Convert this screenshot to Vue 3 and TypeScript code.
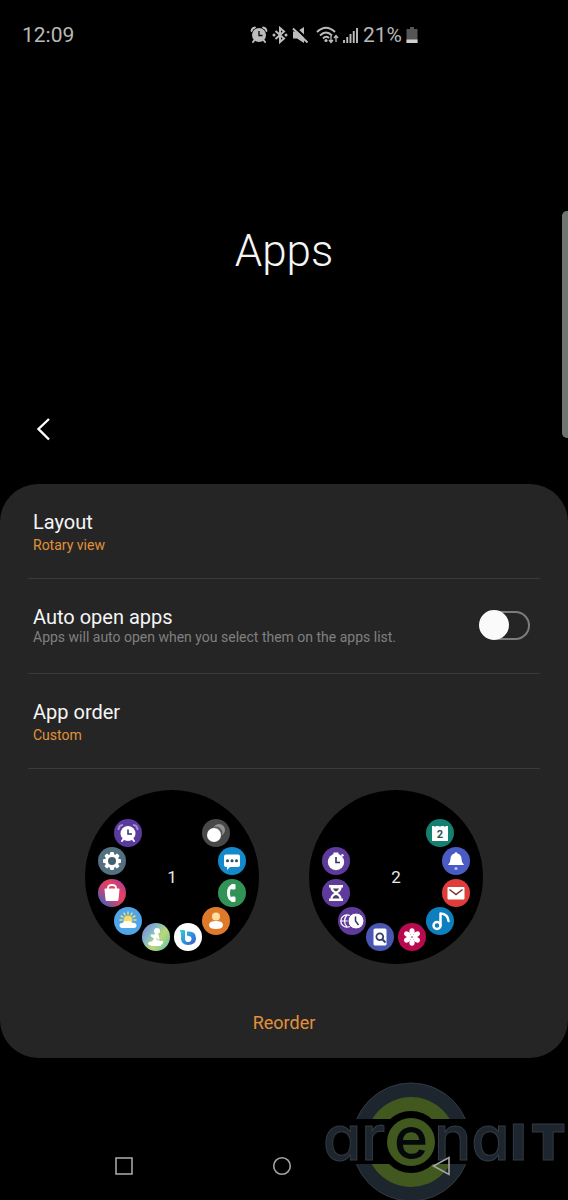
<script setup lang="ts">
import { ref } from 'vue'

interface DialApp {
  icon: string
  slot: number
}

interface Dial {
  label: string
  apps: DialApp[]
}

const autoOpen = ref(false)

const ring = (icons: string[], first: number): DialApp[] =>
  icons.map((icon, i) => ({ icon, slot: first + i }))

const dials: Dial[] = [
  {
    label: '1',
    apps: ring(
      ['recent', 'messages', 'phone', 'contacts', 'bixby', 'health', 'weather', 'store', 'settings', 'alarm'],
      1,
    ),
  },
  {
    label: '2',
    apps: ring(
      ['calendar', 'reminder', 'mail', 'music', 'gallery', 'finder', 'world', 'timer', 'stopwatch'],
      1,
    ),
  },
]

/* Twelve slots of 30 degrees, the first one centred 15 degrees past the top. */
const place = (slot: number): string => {
  const angle = ((slot * 30 + 15) * Math.PI) / 180
  return `translate(${Math.round(62 * Math.sin(angle))} ${Math.round(-62 * Math.cos(angle))})`
}

const gearTeeth = [0, 45, 90, 135, 180, 225, 270, 315]
const petals = [0, 60, 120, 180, 240, 300]
const rays = [-90, -60, -30, 0, 30, 60, 90]
</script>

<template>
  <div class="screen">
    <svg class="sprite" aria-hidden="true">
      <defs>
        <linearGradient id="g-store" x1="0" y1="1" x2="1" y2="0">
          <stop offset="0.1" stop-color="#3c62c4" />
          <stop offset="0.4" stop-color="#c44473" />
          <stop offset="0.65" stop-color="#e83f63" />
          <stop offset="1" stop-color="#8f3bb0" />
        </linearGradient>
        <linearGradient id="g-health" x1="0" y1="0.1" x2="1" y2="0.9">
          <stop offset="0" stop-color="#8d7fd0" />
          <stop offset="0.3" stop-color="#7fb8cc" />
          <stop offset="0.6" stop-color="#bcd873" />
          <stop offset="1" stop-color="#63c2b4" />
        </linearGradient>
        <linearGradient id="g-bixby" x1="0" y1="0" x2="1" y2="1">
          <stop offset="0" stop-color="#35d0d8" />
          <stop offset="0.55" stop-color="#2c8fdc" />
          <stop offset="1" stop-color="#4b50c8" />
        </linearGradient>

        <g id="app-recent">
          <circle r="14" fill="#484848" />
          <circle cx="3" cy="-3" r="6" fill="#929292" />
          <circle cx="0" cy="0" r="6.500" fill="#5c5c5c" />
          <circle cx="-2" cy="2" r="7" fill="#fff" />
        </g>
        <g id="app-messages">
          <circle r="14" fill="#128acb" />
          <path d="M-6-6.500H6Q8-6.500 8-4.500V4Q8 6 6 6H-2L-5 9V6H-6Q-8 6-8 4V-4.500Q-8-6.500-6-6.500Z" fill="#fff" />
          <g fill="#20506f">
            <circle cx="-4.500" cy="-0.300" r="1.500" />
            <circle cy="-0.300" r="1.500" />
            <circle cx="4.500" cy="-0.300" r="1.500" />
          </g>
        </g>
        <g id="app-phone">
          <circle r="14" fill="#319356" />
          <path d="M1-7Q-3.500-6.500-3.500 0T1 7" fill="none" stroke="#fff" stroke-width="3" />
          <rect x="-1" y="-9" width="4.500" height="5.500" rx="1.200" fill="#fff" />
          <rect x="-1" y="3.500" width="4.500" height="5.500" rx="1.200" fill="#fff" />
        </g>
        <g id="app-contacts">
          <circle r="14" fill="#e07a2b" />
          <circle cy="-4.500" r="4" fill="#ffdf9f" />
          <path d="M-7 4Q-7 0 0 0T7 4Q7 8 0 8T-7 4Z" fill="#fff" />
        </g>
        <g id="app-bixby">
          <circle r="14" fill="#fff" />
          <path d="M-8-7H-4Q-3-7-3-6V1.500Q-3 5 0 5Q3.500 5 3.500 1.500Q3.500-1-1-1.500V-5.500H1Q8-5.500 8 1.500Q8 8 0 8Q-7 8-7 1.500V-4Q-8-5-8-7Z" fill="url(#g-bixby)" />
        </g>
        <g id="app-health">
          <circle r="14" fill="url(#g-health)" />
          <circle cx="1" cy="-6" r="3" fill="#fff" />
          <path d="M-5.500-2.500L-2-2.500L0-3.500Q3-3.500 3 0L4 4H7V6L4.500 9H-3Q-8 8.500-8 6Q-7 4-4 4.500L-2 1.500L-5-0.500Z" fill="#fff" />
          <path d="M0 1.500Q3 4.500 5.500 2" fill="none" stroke="#a8cfa0" stroke-width="1" />
        </g>
        <g id="app-weather">
          <circle r="14" fill="#4fa5e8" />
          <circle cy="-1" r="4.500" fill="#f6dc62" />
          <path
            v-for="a in rays"
            :key="a"
            d="M0-6V-8"
            :transform="`translate(0 -1) rotate(${a})`"
            stroke="#f6dc62"
            stroke-width="1.500"
            stroke-linecap="round"
          />
          <path d="M-5.500 7Q-8.500 7-8.500 4.300Q-8.500 2-5.500 2Q-4-1-1 0.300Q2-1 4 1.800Q8.500 1.500 8.500 4.500Q8.500 7 5.500 7Z" fill="#fff" />
        </g>
        <g id="app-store">
          <circle r="14" fill="url(#g-store)" />
          <path d="M-4-3V-5Q-4-8 0-8T4-5V-3" fill="none" stroke="#fff" stroke-width="1.800" />
          <path d="M-6.500-4.500H6.500Q7.700-4.500 7.500-3.500L6.500 6.500Q6.300 8 5 8H-5Q-6.300 8-6.500 6.500L-7.500-3.500Q-7.700-4.500-6.500-4.500Z" fill="#fff" />
        </g>
        <g id="app-settings">
          <circle r="14" fill="#527080" />
          <circle r="7" fill="#fff" />
          <rect
            v-for="a in gearTeeth"
            :key="a"
            x="-2"
            y="-9"
            width="4"
            height="5"
            rx="1"
            fill="#fff"
            :transform="`rotate(${a})`"
          />
          <circle r="4" fill="#46606e" />
        </g>
        <g id="app-alarm">
          <circle r="14" fill="#5a3a9d" />
          <path d="M-9.500-3Q-9.500-8-5-8M9.500-3Q9.500-8 5-8" fill="none" stroke="#a98bd8" stroke-width="2" />
          <path d="M-4.500 6L-6 8M4.500 6L6 8" stroke="#fff" stroke-width="2" stroke-linecap="round" />
          <circle cy="0.500" r="7.500" fill="#fff" />
          <path d="M0-3.500V1H4" fill="none" stroke="#3b2f63" stroke-width="1.500" />
        </g>

        <g id="app-calendar">
          <circle r="14" fill="#148170" />
          <path d="M-8-7H-6L-5-6L-4-7H-1L0-6L1-7H4L5-6L6-7H8V8H-8Z" fill="#fff" />
          <text y="5" class="day">2</text>
        </g>
        <g id="app-reminder">
          <circle r="14" fill="#4a5bc4" />
          <path d="M-1.500-7.500Q0-10.500 1.500-7.500Q5.500-6.500 5.500-2Q5.500 1.500 8 4H-8Q-5.500 1.500-5.500-2Q-5.500-6.500-1.500-7.500Z" fill="#fff" />
          <circle cy="7.500" r="1.600" fill="#a7c2ff" />
        </g>
        <g id="app-mail">
          <circle r="14" fill="#df3d39" />
          <rect x="-8.500" y="-6" width="17" height="12.500" rx="1" fill="#fff" />
          <path d="M-6.500-3.500L0 1.500L6.500-3.500" fill="none" stroke="#792f35" stroke-width="1.500" />
        </g>
        <g id="app-music">
          <circle r="14" fill="#0e7fbe" />
          <circle cx="-3" cy="4.500" r="3.500" fill="none" stroke="#fff" stroke-width="2.500" />
          <path d="M0.500 4.500V-7.500Q8-7 8.500 0" fill="none" stroke="#fff" stroke-width="2.500" stroke-linecap="round" stroke-linejoin="round" />
        </g>
        <g id="app-gallery">
          <circle r="14" fill="#b90a50" />
          <ellipse v-for="a in petals" :key="a" cy="-5.500" rx="2.600" ry="3.300" fill="#fff" :transform="`rotate(${a})`" />
          <path v-for="a in petals" :key="`s${a}`" d="M0 0V-4" stroke="#fff" stroke-width="2.400" :transform="`rotate(${a})`" />
          <circle r="0.800" fill="#b90a50" />
        </g>
        <g id="app-finder">
          <circle r="14" fill="#4957b2" />
          <rect x="-6.500" y="-8.500" width="13" height="17" rx="1.500" fill="#fff" />
          <circle cx="-0.200" cy="-0.200" r="3.400" fill="none" stroke="#39406f" stroke-width="1.800" />
          <path d="M2.300 2.300L5.500 5.500" stroke="#39406f" stroke-width="2" />
        </g>
        <g id="app-world">
          <circle r="14" fill="#5e3b9a" />
          <circle cx="-5" r="6.200" fill="none" stroke="#fff" stroke-width="1.300" />
          <path d="M-5-6Q-10 0-5 6M-11 0H-4" fill="none" stroke="#fff" stroke-width="1.200" />
          <circle cx="4" r="8" fill="#fff" stroke="#5e3b9a" stroke-width="1" />
          <path d="M3.500-4.500V0L6.500 4" fill="none" stroke="#3b2f63" stroke-width="1.500" />
        </g>
        <g id="app-timer">
          <circle r="14" fill="#5e3b9a" />
          <path d="M-7-8H7V-5.500H5.500Q5.500-2 1.500 0Q5.500 2 5.500 5.500H7V8H-7V5.500H-5.500Q-5.500 2-1.500 0Q-5.500-2-5.500-5.500H-7Z" fill="#fff" />
          <path d="M-3-4.500H3Q2.500-2.500 0-1.500Q-2.500-2.500-3-4.500ZM-3.500 5.500Q-3 2.500 0 2Q3 2.500 3.500 5.500Z" fill="#49405f" />
        </g>
        <g id="app-stopwatch">
          <circle r="14" fill="#5e3b9a" />
          <path d="M-2.500-7.500H2.500M5.500-6.500L7.500-5" stroke="#fff" stroke-width="2" />
          <circle cy="1" r="8.200" fill="#fff" />
          <path d="M0-4V1.500H4" fill="none" stroke="#3b2f63" stroke-width="1.600" />
        </g>
      </defs>
    </svg>

    <header class="status">
      <time class="clock">12:09</time>
      <div class="indicators">
        <svg width="18" height="18" viewBox="0 0 18 18" aria-label="Alarm">
          <g fill="none" stroke="#bdbdbd" stroke-linecap="round">
            <path d="M1.500 5Q2 2 5 1.500M16.500 5Q16 2 13 1.500" stroke-width="1.800" />
            <path d="M4.500 14L3 16M13.500 14L15 16" stroke-width="2" />
          </g>
          <circle cx="9" cy="9" r="7" fill="#bdbdbd" />
          <path d="M9 5V9.500H12.500" fill="none" stroke="#111" stroke-width="1.400" />
        </svg>
        <svg width="16" height="18" viewBox="0 0 16 18" aria-label="Bluetooth">
          <path d="M3.500 5L12 12.500L8 16V2L12 5.500L3.500 13" fill="none" stroke="#bdbdbd" stroke-width="2" />
          <circle cx="2" cy="9" r="1.500" fill="#bdbdbd" />
          <circle cx="14" cy="9" r="1.500" fill="#bdbdbd" />
        </svg>
        <svg width="17" height="18" viewBox="0 0 17 18" aria-label="Muted">
          <path d="M1 5.500H5L12 1V17L5 12.500H1Z" fill="#bdbdbd" />
          <path d="M2.500 1L17 15" stroke="#000" stroke-width="2.400" />
          <path d="M1 2.500L15.500 16.500" stroke="#bdbdbd" stroke-width="2" />
        </svg>
        <svg class="wifi" width="23" height="18" viewBox="0 0 23 18" aria-label="Wi-Fi">
          <g fill="none" stroke="#bdbdbd" stroke-width="1.900">
            <path d="M1 6Q10-2.500 19 6" />
            <path d="M4 9.500Q10 3.500 16 9.500" />
            <path d="M7 12.500Q10 9.500 13 12" />
          </g>
          <circle cx="10" cy="14.500" r="1.600" fill="#bdbdbd" />
          <path d="M15 10V16M13 14L15 16.500L17 14M20 16V10M18 12L20 9.500L22 12" fill="none" stroke="#bdbdbd" stroke-width="1.300" />
        </svg>
        <svg width="15" height="18" viewBox="0 0 15 18" aria-label="Signal">
          <path d="M1 17V14M4.250 17V11M7.500 17V8M10.750 17V5M14 17V2" stroke="#bdbdbd" stroke-width="1.900" />
        </svg>
        <span class="percent">21%</span>
        <svg width="12" height="18" viewBox="0 0 12 18" aria-label="Battery">
          <path d="M4 1H8V3H11.500V17H0.500V3H4Z" fill="#555" />
          <path d="M0.500 13.500H11.500V17H0.500Z" fill="#d0d0d0" />
        </svg>
      </div>
    </header>

    <main>
      <h1 class="title">Apps</h1>
      <button class="back" type="button" aria-label="Back">
        <svg width="16" height="24" viewBox="0 0 16 24">
          <path d="M14 2L3.500 12L14 22.500" fill="none" stroke="#fff" stroke-width="2.400" />
        </svg>
      </button>

      <section class="panel">
        <button class="row choice-row" type="button">
          <span class="name">Layout</span>
          <span class="value">Rotary view</span>
        </button>
        <div class="row switch-row">
          <label for="auto-open">
            <span class="name">Auto open apps</span>
            <span class="hint">Apps will auto open when you select them on the apps list.</span>
          </label>
          <input id="auto-open" v-model="autoOpen" class="switch" type="checkbox" role="switch" />
        </div>
        <button class="row choice-row" type="button">
          <span class="name">App order</span>
          <span class="value">Custom</span>
        </button>

        <div class="dials">
          <svg v-for="dial in dials" :key="dial.label" class="dial" viewBox="-87 -87 174 174">
            <circle r="87" fill="#000" />
            <text class="page" y="6">{{ dial.label }}</text>
            <use v-for="app in dial.apps" :key="app.icon" :href="`#app-${app.icon}`" :transform="place(app.slot)" />
          </svg>
        </div>

        <button class="reorder" type="button">Reorder</button>
      </section>
    </main>

    <svg class="brand" width="250" height="120" viewBox="0 0 250 120" aria-label="arenaIT">
      <defs>
        <clipPath id="brand-caps">
          <path d="M0 0H250V39H0ZM0 84H250V120H0Z" />
        </clipPath>
      </defs>
      <g clip-path="url(#brand-caps)">
        <circle cx="93" cy="62" r="59" fill="#1d252e" stroke="#343b43" />
        <circle cx="93" cy="62" r="45" fill="#41591f" />
        <circle cx="93" cy="62" r="31" fill="#000" />
      </g>
      <circle cx="93" cy="62" r="24" fill="#41591f" />
      <g class="wordmark">
        <text x="5" y="80">ar</text>
        <text class="core" x="93" y="79">e</text>
        <text x="116" y="80">na</text>
        <text class="caps" x="193" y="80">I</text>
        <text class="caps" x="213" y="80">T</text>
      </g>
    </svg>

    <nav class="keys">
      <button type="button" aria-label="Recents">
        <svg width="20" height="20" viewBox="0 0 20 20"><rect x="2" y="2" width="16" height="16" fill="none" stroke="#a4a4a4" stroke-width="1.600" /></svg>
      </button>
      <button type="button" aria-label="Home">
        <svg width="20" height="20" viewBox="0 0 20 20"><circle cx="10" cy="10" r="8.300" fill="none" stroke="#a4a4a4" stroke-width="1.600" /></svg>
      </button>
      <button type="button" aria-label="Back">
        <svg width="20" height="20" viewBox="0 0 20 20"><path d="M18 1.500V18.500L2.500 10Z" fill="none" stroke="#a4a4a4" stroke-width="1.600" /></svg>
      </button>
    </nav>

    <div class="edge-handle"></div>
  </div>
</template>

<style>
body {
  margin: 0;
  background: #000;
}
</style>

<style scoped>
.screen {
  position: relative;
  display: flex;
  flex-direction: column;
  min-height: 100vh;
  background: #000;
  color: #f5f5f5;
  font-family: Roboto, 'Liberation Sans', sans-serif;
}

.sprite {
  position: absolute;
  width: 0;
  height: 0;
}

button {
  margin: 0;
  padding: 0;
  border: 0;
  background: none;
  color: inherit;
  font: inherit;
  cursor: pointer;
}

svg {
  display: block;
}

.status {
  display: grid;
  grid-template-columns: 44% 1fr;
  align-items: center;
  height: 70px;
  color: #b8b8b8;
  font-size: 21px;
}

.clock {
  padding-left: 22px;
}

.indicators {
  display: flex;
  align-items: center;
  gap: 4px;
}

.wifi {
  margin-left: 3px;
}

.percent {
  padding-left: 1px;
}

.title {
  margin: 0;
  padding-top: 153px;
  font-size: 44px;
  font-weight: 300;
  line-height: 56px;
  text-align: center;
}

.back {
  display: grid;
  place-items: center;
  width: 48px;
  height: 48px;
  margin: 126px 0 31px 19px;
}

.panel {
  padding-bottom: 23px;
  border-radius: 38px;
  background: #252525;
}

.row {
  display: flex;
  box-sizing: border-box;
  width: calc(100% - 56px);
  min-height: 95px;
  margin: 0 28px;
  padding: 26px 10px 18px 5px;
  border-bottom: 1px solid #3a3a3a;
  text-align: left;
}

.choice-row {
  flex-direction: column;
  align-items: flex-start;
  justify-content: flex-start;
}

.switch-row {
  align-items: flex-start;
  justify-content: space-between;
}

.name,
.value,
.hint {
  display: block;
}

.name {
  font-size: 20px;
  line-height: 24px;
}

.value {
  color: #e2913a;
  font-size: 14px;
  line-height: 22px;
}

.hint {
  color: #808080;
  font-size: 14px;
  line-height: 16px;
}

.switch {
  position: relative;
  flex: none;
  box-sizing: border-box;
  width: 50px;
  height: 29px;
  margin: 6px 0 0;
  border: 2px solid #7c7c7c;
  border-radius: 15px;
  appearance: none;
  cursor: pointer;
}

.switch::before {
  position: absolute;
  top: -3px;
  left: -3px;
  width: 30px;
  height: 30px;
  border-radius: 50%;
  background: #fafafa;
  content: '';
}

.switch:checked::before {
  right: -3px;
  left: auto;
}

.dials {
  display: flex;
  justify-content: center;
  gap: 50px;
  padding-top: 21px;
}

.dial {
  width: 174px;
  height: 174px;
}

.page {
  fill: #e8e8e8;
  font-size: 17px;
  text-anchor: middle;
}

.day {
  fill: #23584f;
  font-size: 11px;
  font-weight: 700;
  text-anchor: middle;
}

.reorder {
  display: block;
  margin: 47px auto 0;
  color: #e2913a;
  font-size: 18px;
  line-height: 24px;
}

.brand {
  position: absolute;
  right: 0;
  bottom: 0;
}

.wordmark {
  fill: #1d252e;
  stroke: #343b43;
  font-family: Inter, sans-serif;
  font-feature-settings: 'cv11', 'ss03';
  font-size: 62px;
  font-weight: 500;
}

.core {
  fill: #05080a;
  stroke: none;
  font-size: 58px;
  text-anchor: middle;
}

.caps {
  font-size: 50px;
  font-weight: 900;
}

.keys {
  position: relative;
  display: grid;
  grid-template-columns: repeat(3, 1fr);
  height: 68px;
  margin-top: auto;
  padding: 0 48px 0 45px;
}

.keys button {
  display: grid;
  place-items: center;
}

.edge-handle {
  position: absolute;
  top: 211px;
  right: 0;
  width: 6px;
  height: 227px;
  border-radius: 5px 0 0 5px;
  background: #6e7673;
}
</style>
